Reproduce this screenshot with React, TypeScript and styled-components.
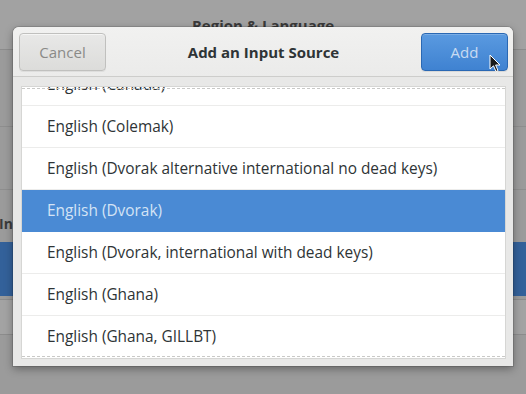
import React from "react";
import styled, { createGlobalStyle } from "styled-components";

const Global = createGlobalStyle`
  html, body { margin: 0; padding: 0; }
  body {
    width: 526px; height: 394px; overflow: hidden;
    background: #9c9c9c;
    font-family: "Open Sans", "Noto Sans", sans-serif;
  }
`;

const Stage = styled.div`
  position: relative;
  width: 526px;
  height: 394px;
  overflow: hidden;
  background: #9d9d9d;
`;

/* Dimmed window behind */
const BgWindow = styled.div`
  display: flex;
  flex-direction: column;
  height: 100%;
`;

const BgHeader = styled.div`
  height: 50px;
  flex: none;
  box-sizing: border-box;
  background: #a2a2a2;
  border-bottom: 1px solid #8c8c8c;
  display: flex;
  justify-content: center;
  align-items: center;
`;

const BgTitle = styled.div`
  font-weight: 700;
  font-size: 15px;
  color: #3a3a3a;
`;

const BgBody = styled.div`
  flex: 1;
  display: flex;
  flex-direction: column;
  background: #9b9b9b;
`;

const BgRow = styled.div<{ $h: number }>`
  height: ${(p) => p.$h}px;
  flex: none;
  border-bottom: 1px solid #8e8e8e;
`;

const BgLabel = styled.div`
  height: 38px;
  flex: none;
  display: flex;
  align-items: center;
  padding-top: 14px;
  font-weight: 700;
  font-size: 14px;
  color: #3a3a3a;
  margin-left: -1px;
`;

const BgSelected = styled.div`
  height: 54px;
  flex: none;
  background: #33619a;
`;

const BgButtons = styled.div`
  height: 34px;
  flex: none;
  margin-top: 3px;
  background: #a3a3a3;
  border-top: 1px solid #8c8c8c;
  border-bottom: 1px solid #8c8c8c;
`;

/* Dialog */
const Dialog = styled.div`
  position: absolute;
  left: 13px;
  top: 27px;
  width: 500px;
  height: 339px;
  background: #e8e8e7;
  border-radius: 6px 6px 0 0;
  box-shadow: 0 3px 8px rgba(0, 0, 0, 0.35), 0 0 0 1px rgba(0, 0, 0, 0.12);
  display: flex;
  flex-direction: column;
  overflow: hidden;
`;

const HeaderBar = styled.div`
  height: 50px;
  flex: none;
  box-sizing: border-box;
  background: linear-gradient(#f1f1f0, #ebebea);
  border-bottom: 1px solid #cdcdcb;
  display: flex;
  align-items: center;
  justify-content: space-between;
  padding: 0 5px 0 6px;
`;

const Button = styled.div<{ $primary?: boolean }>`
  position: relative;
  width: 87px;
  height: 38px;
  box-sizing: border-box;
  border-radius: 4px;
  display: flex;
  align-items: center;
  justify-content: center;
  font-size: 15px;
  border: 1px solid ${(p) => (p.$primary ? "#2a68b3" : "#c0c0be")};
  background: ${(p) =>
    p.$primary
      ? "linear-gradient(#5a9ae0, #3f82d1)"
      : "linear-gradient(#e8e8e7, #dcdcda)"};
  color: ${(p) => (p.$primary ? "#c8dbf2" : "#8a8a88")};
  box-shadow: ${(p) =>
    p.$primary
      ? "inset 0 1px rgba(255,255,255,0.2), 0 1px rgba(0,0,0,0.08)"
      : "inset 0 1px rgba(255,255,255,0.6), 0 1px rgba(0,0,0,0.06)"};
`;

const Title = styled.div`
  font-weight: 700;
  font-size: 15px;
  color: #2e3436;
`;

const Cursor = styled.svg`
  position: absolute;
  left: 67px;
  top: 20px;
`;

const Content = styled.div`
  flex: 1;
  display: flex;
  padding: 9px 7px 8px 8px;
`;

const ListFrame = styled.div`
  flex: 1;
  position: relative;
  background: #ffffff;
  border: 1px solid #d6d6d4;
  overflow: hidden;
`;

const Undershoot = styled.div<{ $bottom?: boolean }>`
  position: absolute;
  left: 0;
  right: 0;
  ${(p) => (p.$bottom ? "bottom: 1px;" : "top: 1px;")}
  height: 0;
  border-top: 1px dashed #c9c9c7;
  z-index: 2;
`;

const Rows = styled.div`
  margin-top: -23px;
  display: flex;
  flex-direction: column;
`;

const Row = styled.div<{ $selected?: boolean; $last?: boolean }>`
  height: 42px;
  flex: none;
  box-sizing: border-box;
  display: flex;
  align-items: center;
  padding-left: 25px;
  font-size: 15.4px;
  color: ${(p) => (p.$selected ? "#d4e3f5" : "#2e3436")};
  background: ${(p) => (p.$selected ? "#4a8ad4" : "#ffffff")};
  border-bottom: 1px solid
    ${(p) => (p.$selected ? "#4a8ad4" : p.$last ? "#ffffff" : "#ececeb")};
  white-space: nowrap;
`;

const items = [
  "English (Canada)",
  "English (Colemak)",
  "English (Dvorak alternative international no dead keys)",
  "English (Dvorak)",
  "English (Dvorak, international with dead keys)",
  "English (Ghana)",
  "English (Ghana, GILLBT)",
];

export default function App() {
  return (
    <Stage>
      <Global />
      <BgWindow>
        <BgHeader>
          <BgTitle>Region &amp; Language</BgTitle>
        </BgHeader>
        <BgBody>
          <BgRow $h={76} />
          <BgRow $h={62} />
          <BgLabel>Input Sources</BgLabel>
          <BgSelected />
          <BgButtons />
        </BgBody>
      </BgWindow>

      <Dialog>
        <HeaderBar>
          <Button>Cancel</Button>
          <Title>Add an Input Source</Title>
          <Button $primary>
            Add
            <Cursor width="12" height="19" viewBox="0 0 12 19">
              <path
                d="M1 1 L1 15 L4.5 11.8 L7 17.5 L9 16.6 L6.6 11 L11 11 Z"
                fill="#1a1a1a"
                stroke="#ffffff"
                strokeWidth="1"
                strokeLinejoin="round"
              />
            </Cursor>
          </Button>
        </HeaderBar>
        <Content>
          <ListFrame>
            <Undershoot />
            <Rows>
              {items.map((t, i) => (
                <Row
                  key={t}
                  $selected={t === "English (Dvorak)"}
                  $last={i === items.length - 1}
                >
                  {t}
                </Row>
              ))}
            </Rows>
            <Undershoot $bottom />
          </ListFrame>
        </Content>
      </Dialog>
    </Stage>
  );
}
